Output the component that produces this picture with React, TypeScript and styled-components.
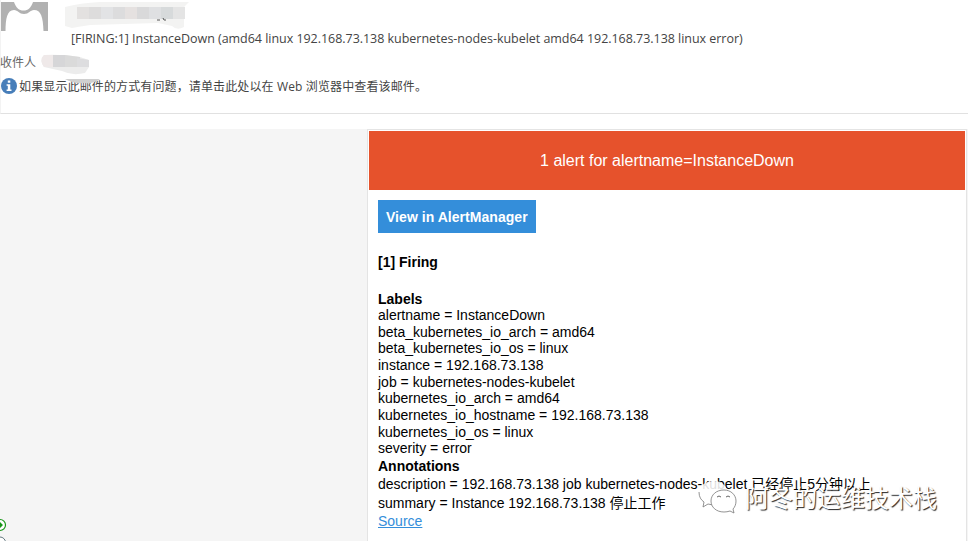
import React from "react";
import styled, { createGlobalStyle } from "styled-components";

const Global = createGlobalStyle`
  * { box-sizing: border-box; }
  body { margin: 0; background: #fff; overflow: hidden; }
`;

const Page = styled.div`
  position: relative;
  width: 968px;
  height: 541px;
  overflow: hidden;
  display: flex;
  flex-direction: column;
  background: #fff;
`;

const MailHeader = styled.header`
  position: relative;
  height: 114px;
  flex: none;
  display: flex;
  flex-direction: column;
  border-left: 1px solid #f3f3f3;
  border-bottom: 1px solid #e1e1e1;
  color: #444;
  font: 12.5px/24px "Open Sans", "Noto Sans CJK SC", sans-serif;
`;

const SenderRow = styled.div`
  display: flex;
  height: 51px;
`;

const SenderText = styled.div`
  display: flex;
  flex-direction: column;
  padding-left: 17px;
`;

const Sender = styled.div`
  height: 27px;
`;

const Subject = styled.div`
  padding-left: 6px;
  letter-spacing: -0.036px;
  white-space: nowrap;
`;

const RecipientRow = styled.div`
  display: flex;
  height: 24px;
  margin-left: -1px;
  font-size: 12px;
  color: #666;
`;

const NoticeRow = styled.div`
  display: flex;
  align-items: center;
  height: 24px;
  gap: 2px;
  font-size: 12px;
  letter-spacing: 0.13px;
  white-space: nowrap;

  svg {
    margin-bottom: 2px;
  }
`;

const MailBody = styled.main`
  margin-top: 15px;
  flex: 1;
  display: flex;
  background: #f5f5f5;
`;

const Gutter = styled.aside`
  width: 367px;
  flex: none;
  display: flex;
  align-items: flex-end;
`;

const Card = styled.section`
  width: 600px;
  flex: none;
  display: flex;
  flex-direction: column;
  padding: 1px;
  border: 1px solid #e4e4e4;
  border-bottom: 0;
  background: #fff;
  font-family: "Liberation Sans", "Noto Sans CJK SC", sans-serif;
  color: #000;
`;

const Banner = styled.div`
  height: 59px;
  display: flex;
  align-items: center;
  justify-content: center;
  background: #e6522c;
  color: #fff;
  font-size: 16px;
`;

const Content = styled.div`
  display: flex;
  flex-direction: column;
  align-items: flex-start;
  padding: 10px 0 0 9px;
  font-size: 14px;
`;

const Button = styled.a`
  width: 158px;
  height: 33px;
  padding-left: 8px;
  background: #348eda;
  color: #fff;
  font-weight: 700;
  line-height: 34px;
  letter-spacing: 0.04px;
  white-space: nowrap;
`;

const Heading = styled.div<{ $top?: number; $height?: number }>`
  margin-top: ${(p) => p.$top ?? 0}px;
  height: ${(p) => p.$height ?? 17}px;
  line-height: ${(p) => p.$height ?? 17}px;
  font-weight: 700;
`;

const Line = styled.div<{ $height?: number }>`
  height: ${(p) => p.$height ?? 16.67}px;
  line-height: ${(p) => p.$height ?? 16.67}px;
  white-space: nowrap;
`;

const Source = styled.a`
  color: #348eda;
  line-height: 18px;
  text-decoration: underline;
`;

const Watermark = styled.div`
  position: absolute;
  left: 697px;
  top: 477px;
  display: flex;
  align-items: center;
  gap: 6px;
  color: #fff;
  font: 24px/40px "Noto Sans CJK SC", sans-serif;
  text-shadow: 1px 1px 1px #222;
  white-space: nowrap;
`;

const Redactions = styled.svg`
  position: absolute;
  left: -1px;
  top: 0;
`;

const labels = [
  "alertname = InstanceDown",
  "beta_kubernetes_io_arch = amd64",
  "beta_kubernetes_io_os = linux",
  "instance = 192.168.73.138",
  "job = kubernetes-nodes-kubelet",
  "kubernetes_io_arch = amd64",
  "kubernetes_io_hostname = 192.168.73.138",
  "kubernetes_io_os = linux",
  "severity = error",
];

const senderTiles = ["#e3e1e0", "#dddcdc", "#e2e3e5", "#dcdcdd", "#e5e1e0", "#d9d9da", "#dfe0e2", "#d7dadb", "#e4e4e4"];

const Avatar = () => (
  <svg width="47" height="31" viewBox="0 0 47 31">
    <path d="M0 2H47V31H42.5C42 17 40 10 33 10C29 10 28 14 23 14C18 14 17 10 13 10C6 10 4.500 19 4.500 31H0Z" fill="#b1b1b1" />
    <path d="M13 2C15 8 18 10.500 22.500 10.500C27 10.500 30 8 32 2Z" fill="#fff" />
  </svg>
);

const InfoIcon = () => (
  <svg width="16" height="16" viewBox="0 0 16 16">
    <circle cx="8" cy="8" r="8" fill="#477eb9" />
    <path d="M6.800 2.600H9.300V4.700H6.800ZM5.600 6.200H9.300V11.400H10.500V13H5.600V11.400H6.800V7.700H5.600Z" fill="#fff" />
  </svg>
);

const RedactionMarks = () => (
  <Redactions width="200" height="92" viewBox="0 0 200 92">
    <path d="M65 7Q80 3 100 2H189L184 7V27Q177 31 172 26L158 23L90 25Q77 27 72 28L65 26Z" fill="#f3f3f2" />
    {senderTiles.map((fill, i) => (
      <rect key={i} x={77 + i * 12} y="7" width="12" height="12" fill={fill} />
    ))}
    <path d="M157 20h3M163 18l1 2h2" stroke="#555" fill="none" />
    <path d="M44 55Q62 54 80 57L89 60V67L85 73Q72 76 62 71L44 67Q39 60 44 55Z" fill="#ececec" />
    <path d="M44 55H53V67H44Q39 60 44 55Z" fill="#efe9e9" />
    <path d="M53 55H65V67H53Z" fill="#d6d6d8" />
    <path d="M65 55L80 57V67H65Z" fill="#dadada" />
    <path d="M77 58L89 60V67H77Z" fill="#dddddf" />
    <path d="M65 79H100Q94 84 84 83Q73 84 65 79Z" fill="#cfcfcf" />
  </Redactions>
);

const SideIcons = () => (
  <svg width="8" height="24" viewBox="0 0 8 24">
    <circle cx="0" cy="8" r="5.500" fill="#fff" stroke="#159515" strokeWidth="1.200" />
    <path d="M-3 7H0V5L3 8L0 11V9H-3Z" fill="#159515" />
    <circle cx="0" cy="25.500" r="5.500" fill="#fff" stroke="#60757d" />
  </svg>
);

const ChatLogo = () => (
  <svg width="42" height="38" viewBox="0 0 42 38">
    <path d="M17 3C8 3 2 8 2 15C2 19 4 22 7 24L6 28L11 26Q14 27 18 27L31 15C30 8 25 3 17 3Z" fill="#fff" fillOpacity=".88" />
    <path d="M2 14C2 19 4 22 7 24L6 29L11 26L16 27" fill="none" stroke="#777" strokeWidth=".8" />
    <path d="M27 12C19 12 14 17 14 23C14 29 19 34 27 34Q30 34 33 33L37 35L36 31C38 29 39 26 39 23C39 17 34 12 27 12Z" fill="#fff" stroke="#777" strokeWidth=".8" />
    <path d="M20 19Q22 17 24 19M29 19Q31 17 33 19" fill="none" stroke="#666" />
  </svg>
);

export default function App() {
  return (
    <Page>
      <Global />
      <MailHeader>
        <SenderRow>
          <Avatar />
          <SenderText>
            <Sender />
            <Subject>[FIRING:1] InstanceDown (amd64 linux 192.168.73.138 kubernetes-nodes-kubelet amd64 192.168.73.138 linux error)</Subject>
          </SenderText>
        </SenderRow>
        <RecipientRow>收件人</RecipientRow>
        <NoticeRow>
          <InfoIcon />
          <span>如果显示此邮件的方式有问题，请单击此处以在 Web 浏览器中查看该邮件。</span>
        </NoticeRow>
        <RedactionMarks />
      </MailHeader>
      <MailBody>
        <Gutter>
          <SideIcons />
        </Gutter>
        <Card>
          <Banner>1 alert for alertname=InstanceDown</Banner>
          <Content>
            <Button>View in AlertManager</Button>
            <Heading $top={21}>[1] Firing</Heading>
            <Heading $top={20} $height={16}>Labels</Heading>
            {labels.map((label) => (
              <Line key={label}>{label}</Line>
            ))}
            <Heading $height={18}>Annotations</Heading>
            <Line $height={19}>description = 192.168.73.138 job kubernetes-nodes-kubelet 已经停止5分钟以上</Line>
            <Line $height={18}>summary = Instance 192.168.73.138 停止工作</Line>
            <Source>Source</Source>
          </Content>
        </Card>
      </MailBody>
      <Watermark>
        <ChatLogo />
        <span>阿冬的运维技术栈</span>
      </Watermark>
    </Page>
  );
}
